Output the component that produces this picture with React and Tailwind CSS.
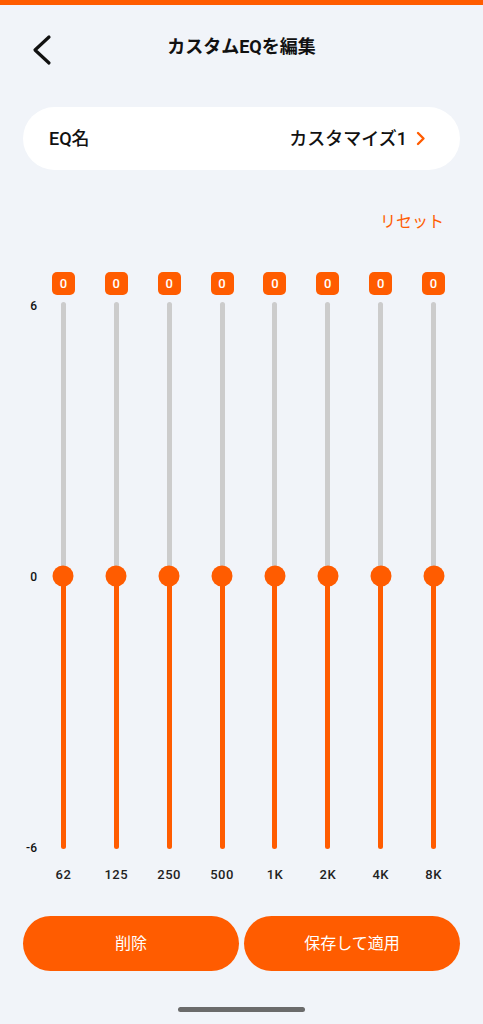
import React from "react";

const bands = ["62", "125", "250", "500", "1K", "2K", "4K", "8K"];

function Slider({ value }) {
  return (
    <div className="flex flex-col items-center">
      <div className="flex h-[23px] w-[23px] items-center justify-center rounded-[5px] bg-[#ff5c00] text-[13px] font-medium text-white">
        {value}
      </div>
      <div className="relative mt-[7px] flex h-[547px] w-[5px] flex-col">
        <div className="h-1/2 w-full rounded-t-full bg-[#cccccc]" />
        <div className="h-1/2 w-full rounded-b-full bg-[#ff5c00]" />
        <div className="absolute left-1/2 top-1/2 h-[21px] w-[21px] -translate-x-1/2 -translate-y-1/2 rounded-full bg-[#ff5c00]" />
      </div>
    </div>
  );
}

export default function App() {
  return (
    <div
      className="flex min-h-[1024px] w-full flex-col bg-[#f1f4f9] text-[#111111]"
      style={{ fontFamily: 'Roboto, "Noto Sans CJK JP", sans-serif' }}
    >
      <div className="h-[5px] w-full bg-[#ff5c00]" />

      {/* header */}
      <div className="relative flex h-[82px] items-center justify-center">
        <button className="absolute left-[26px] top-[25px] p-1">
          <svg width="24" height="32" viewBox="0 0 24 32" fill="none">
            <path d="M19 3 L5 16 L19 29" stroke="#111" strokeWidth="3.2" strokeLinecap="round" strokeLinejoin="round" />
          </svg>
        </button>
        <h1 className="text-[18px] font-bold">カスタムEQを編集</h1>
      </div>

      {/* EQ name card */}
      <div className="mx-[23px] mt-[20px] flex h-[63px] items-center justify-between rounded-full bg-white pl-[26px] pr-[34px]">
        <span className="text-[18px] font-medium">EQ名</span>
        <div className="flex items-center gap-[9px]">
          <span className="text-[18px] font-medium">カスタマイズ1</span>
          <svg width="10" height="15" viewBox="0 0 10 15" fill="none">
            <path d="M2 2 L7.5 7.5 L2 13" stroke="#ff5c00" strokeWidth="2.4" strokeLinecap="round" strokeLinejoin="round" />
          </svg>
        </div>
      </div>

      <div className="mt-[42px] flex h-[20px] items-center justify-end pr-[39px]">
        <span className="text-[16px] text-[#ff5c00]">リセット</span>
      </div>

      {/* sliders */}
      <div className="mt-[40px] flex px-[23px]">
        <div className="mt-[27px] flex h-[556px] w-[14px] flex-col items-end justify-between text-[12px] font-medium leading-[14px]">
          <span>6</span>
          <span>0</span>
          <span>-6</span>
        </div>
        <div className="grid flex-1 grid-cols-8">
          {bands.map((b) => (
            <div key={b} className="flex flex-col items-center">
              <Slider value="0" />
              <span className="mt-[18px] h-[16px] text-[13px] font-medium leading-[16px] tracking-[0.5px] text-[#222]">{b}</span>
            </div>
          ))}
        </div>
      </div>

      {/* buttons */}
      <div className="mx-[23px] mt-[33px] flex gap-[5px]">
        <button className="flex h-[55px] flex-1 items-center justify-center rounded-full bg-[#ff5c00] text-[16px] text-white">
          削除
        </button>
        <button className="flex h-[55px] flex-1 items-center justify-center rounded-full bg-[#ff5c00] text-[16px] text-white">
          保存して適用
        </button>
      </div>

      <div className="mt-[36px] flex justify-center">
        <div className="h-[5px] w-[127px] rounded-full bg-[#6b6b6b]" />
      </div>
    </div>
  );
}
